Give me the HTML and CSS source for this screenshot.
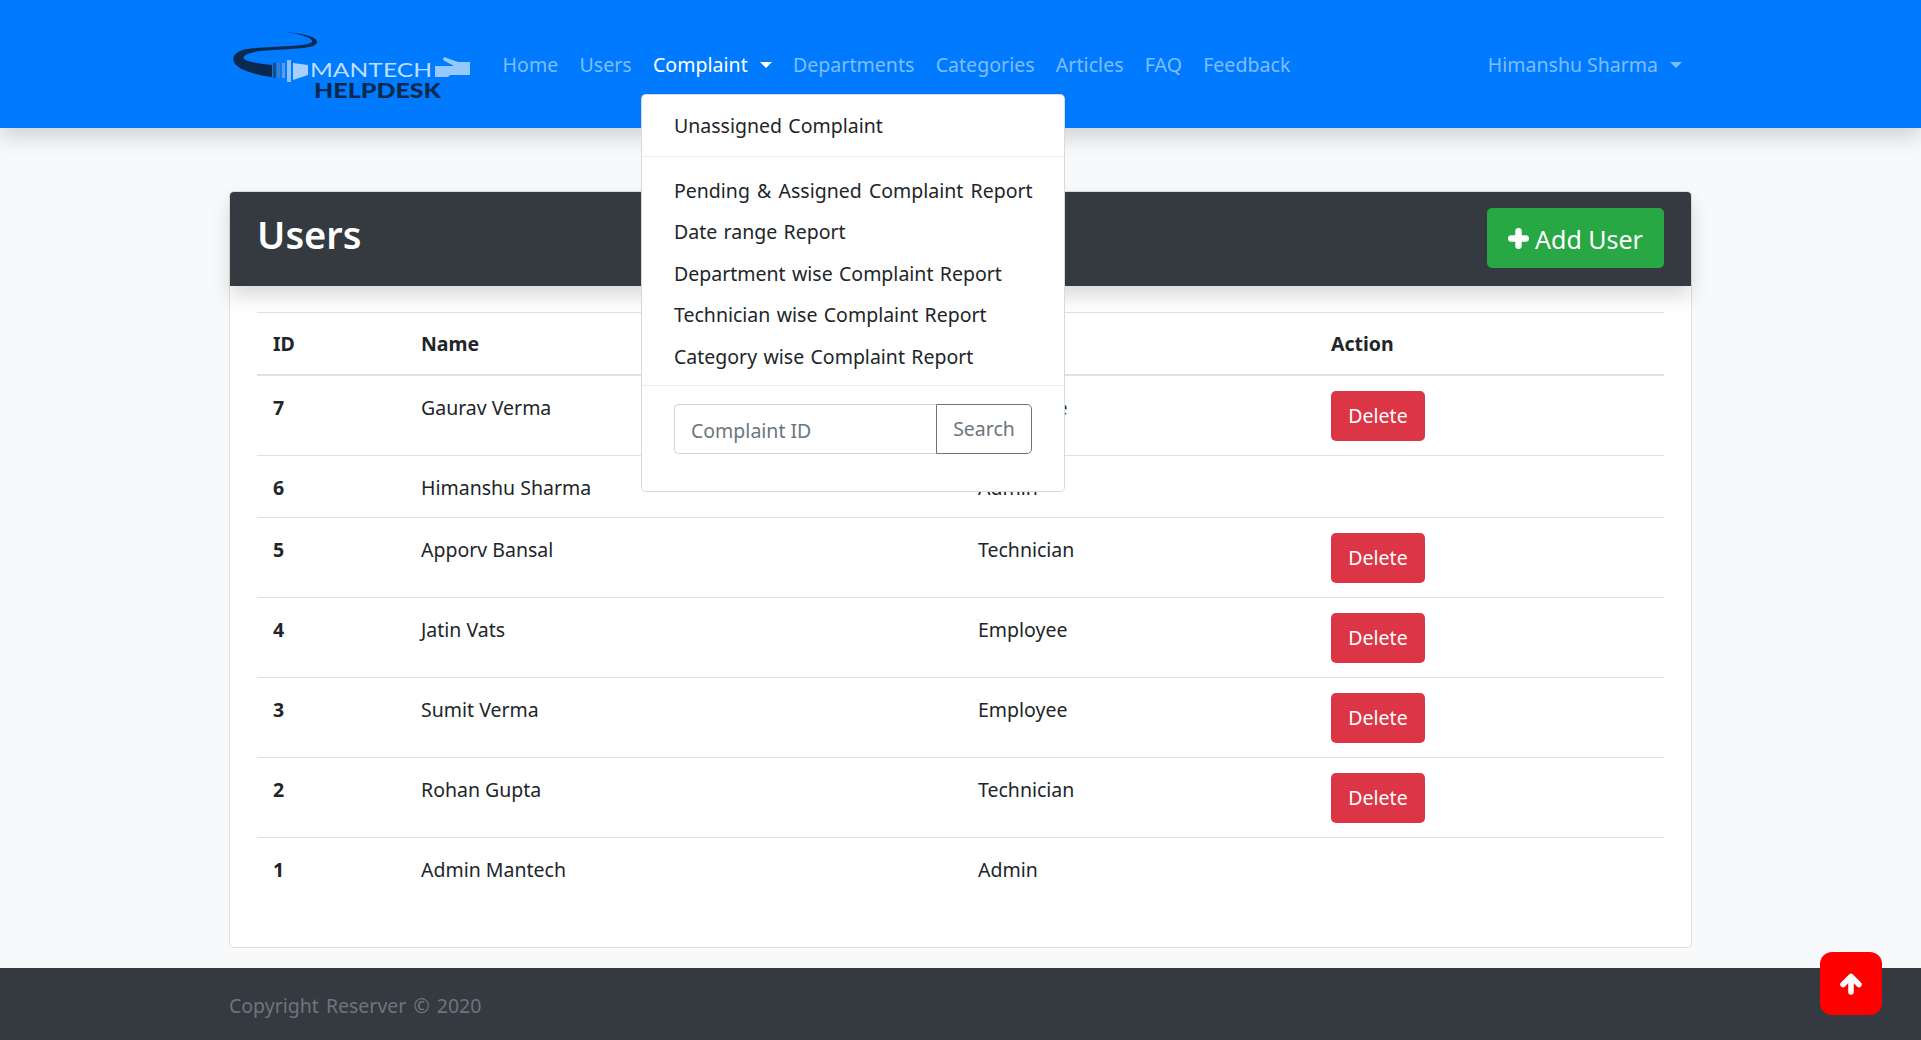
FILE: index.html
```html
<!DOCTYPE html>
<html>
<head>
  <meta charset="utf-8">
  <title>Users</title>
  <link rel="stylesheet" href="styles.css">
</head>
<body>
  <nav class="navbar">
    <div class="nav-inner">
      <a class="logo" href="#">
        <svg width="246" height="76" viewBox="0 0 246 76">
          <path d="M50 2C68 3 85 6 85 12C85 17 72 18 60 19C45 20 24 20 16 24C10 26 10 29 16 31C22 33 32 34 40 35L40 47C28 46 10 41 4 35C0 31 0 26 6 22C12 18 25 18 40 17C55 16 76 16 80 12C82 8 66 3 50 2Z" fill="#0a2a4d"/>
          <rect x="41" y="33" width="3" height="15" fill="#1c4f86"/>
          <rect x="45" y="33" width="3" height="15" fill="#3d7fc6"/>
          <rect x="50" y="33" width="3" height="15" fill="#5c9de6"/>
          <rect x="55" y="30" width="4" height="22" fill="#8cc0ff"/>
          <path d="M61 33L76 35L76 45L61 50Z" fill="#a5d0ff"/>
          <text class="logo-top" x="78" y="47" textLength="122" lengthAdjust="spacingAndGlyphs">MANTECH</text>
          <path d="M203 36L222 36L211 30L212 27L226 32L238 32L238 45L218 45L216 47L203 47Z" fill="#96c9ff"/>
          <text class="logo-bottom" x="82" y="67.5" textLength="127" lengthAdjust="spacingAndGlyphs">HELPDESK</text>
        </svg>
      </a>
      <ul class="nav-links">
        <li><a href="#">Home</a></li>
        <li><a href="#">Users</a></li>
        <li><a class="active caret" href="#">Complaint</a></li>
        <li><a href="#">Departments</a></li>
        <li><a href="#">Categories</a></li>
        <li><a href="#">Articles</a></li>
        <li><a href="#">FAQ</a></li>
        <li><a href="#">Feedback</a></li>
      </ul>
      <a class="user-link caret" href="#">Himanshu Sharma</a>
    </div>
  </nav>

  <div class="dropdown">
    <a href="#">Unassigned Complaint</a>
    <hr class="hr-top">
    <a class="item-wide" href="#">Pending &amp; Assigned Complaint Report</a>
    <a href="#">Date range Report</a>
    <a href="#">Department wise Complaint Report</a>
    <a href="#">Technician wise Complaint Report</a>
    <a href="#">Category wise Complaint Report</a>
    <hr class="hr-bottom">
    <form class="search">
      <input type="text" placeholder="Complaint ID">
      <button type="button">Search</button>
    </form>
  </div>

  <main class="card">
    <div class="card-head">
      <h2>Users</h2>
      <a class="btn-add" href="#">
        <svg width="21" height="21" viewBox="0 0 21 21"><path d="M10.5 3.25V17.75M3.25 10.5H17.75" fill="none" stroke="#fff" stroke-width="6.5" stroke-linecap="round"/></svg>
        Add User
      </a>
    </div>
    <div class="card-body">
      <table>
        <thead>
          <tr><th class="col-id">ID</th><th class="col-name">Name</th><th class="col-role">Type</th><th>Action</th></tr>
        </thead>
        <tbody>
          <tr><th>7</th><td>Gaurav Verma</td><td>Employee</td><td><a class="btn-del" href="#">Delete</a></td></tr>
          <tr><th>6</th><td>Himanshu Sharma</td><td>Admin</td><td></td></tr>
          <tr><th>5</th><td>Apporv Bansal</td><td>Technician</td><td><a class="btn-del" href="#">Delete</a></td></tr>
          <tr><th>4</th><td>Jatin Vats</td><td>Employee</td><td><a class="btn-del" href="#">Delete</a></td></tr>
          <tr><th>3</th><td>Sumit Verma</td><td>Employee</td><td><a class="btn-del" href="#">Delete</a></td></tr>
          <tr><th>2</th><td>Rohan Gupta</td><td>Technician</td><td><a class="btn-del" href="#">Delete</a></td></tr>
          <tr><th>1</th><td>Admin Mantech</td><td>Admin</td><td></td></tr>
        </tbody>
      </table>
    </div>
  </main>

  <footer>
    <p>Copyright Reserver © 2020</p>
  </footer>

  <a class="to-top" href="#">
    <svg width="22" height="22" viewBox="0 0 22 22"><path d="M11 4V19M3 11.5L11 3.5L19 11.5" fill="none" stroke="#fff" stroke-width="5.5" stroke-linecap="round" stroke-linejoin="round"/></svg>
  </a>
</body>
</html>
```

FILE: styles.css
```css
*{
  box-sizing: border-box;
}
html, body{
  margin: 0;
  padding: 0;
  overflow: hidden;
}
body{
  height: 1040px;
  background: #f8f9fa;
  color: #212529;
  font-family: "Noto Sans", "Open Sans", sans-serif;
  font-size: 19.5px;
  line-height: 30px;
}
a{
  text-decoration: none;
}

/* navbar */
.navbar{
  height: 128px;
  background: #007bff;
  box-shadow: 0 10px 20px rgba(0,0,0,.15);
  padding: 0 229px 0 229px;
}
.nav-inner{
  display: flex;
  align-items: center;
  height: 100%;
  padding-top: 2px;
}
.logo{
  display: block;
  width: 263px;
  height: 76px;
  padding-left: 3px;
  margin-top: 6px;
}
.logo-top{
  font-family: "Lato", sans-serif;
  font-size: 20px;
  fill: #bfdeff;
}
.logo-bottom{
  font-family: "Lato", sans-serif;
  font-size: 21px;
  font-weight: 900;
  fill: #0a2a4d;
}
.nav-links{
  display: flex;
  list-style: none;
  margin: 0;
  padding: 0;
  flex: 1;
  letter-spacing: .05px;
}
.nav-links a{
  display: block;
  padding: 0 10.6px;
  color: rgba(255,255,255,.5);
}
.nav-links a.active{
  color: #fff;
}
.user-link{
  color: rgba(255,255,255,.5);
  margin-right: 10px;
}
.caret::after{
  content: "";
  display: inline-block;
  margin-left: 12px;
  vertical-align: 4px;
  border-top: 6px solid;
  border-left: 6px solid transparent;
  border-right: 6px solid transparent;
}

/* complaint menu */
.dropdown{
  position: absolute;
  left: 641px;
  top: 94px;
  width: 424px;
  height: 398px;
  background: #fff;
  border: 1px solid rgba(0,0,0,.15);
  border-radius: 5px;
  padding: 10px 0;
  z-index: 5;
}
.dropdown a{
  display: block;
  padding: 5.75px 32px;
  color: #212529;
  white-space: nowrap;
  word-spacing: 1.3px;
}
.dropdown a.item-wide{
  word-spacing: 2.1px;
}
.dropdown hr{
  border: 0;
  border-top: 1px solid #e9ecef;
}
.hr-top{
  margin: 9px 0 13.5px 0;
}
.hr-bottom{
  margin: 7.5px 0 10px 0;
}
.search{
  display: flex;
  margin: 18px 32px 0 32px;
}
.search input{
  width: 262px;
  height: 50px;
  padding: 2px 16px 0 16px;
  font: inherit;
  color: #495057;
  background: #fff;
  border: 1px solid #ced4da;
  border-right: 0;
  border-radius: 5px 0 0 5px;
  outline: none;
}
.search input::placeholder{
  color: #6c757d;
}
.search button{
  width: 96px;
  height: 50px;
  font: inherit;
  color: #6c757d;
  background: #fff;
  border: 1px solid #6c757d;
  border-radius: 0 5px 5px 0;
  padding: 0;
}

/* users card */
.card{
  margin: 63px 229px 0 229px;
  height: 757px;
  background: #fff;
  border: 1px solid rgba(0,0,0,.125);
  border-radius: 5px;
}
.card-head{
  display: flex;
  justify-content: space-between;
  align-items: center;
  height: 94px;
  padding: 0 27px;
  background: #343a40;
  color: #fff;
  border-radius: 4px 4px 0 0;
  box-shadow: 0 10px 20px rgba(0,0,0,.15);
  position: relative;
}
.card-head h2{
  margin: 0 0 10px 0;
  font-size: 38px;
  font-weight: 600;
  line-height: 48px;
}
.btn-add{
  display: flex;
  align-items: center;
  gap: 6px;
  height: 60px;
  width: 177px;
  justify-content: center;
  padding-top: 2px;
  margin-bottom: 2px;
  background: #28a745;
  color: #fff;
  font-size: 25px;
  border-radius: 5px;
}
.btn-add svg{
  margin-top: -2px;
}
.card-body{
  padding: 26px 27px 0 27px;
}
table{
  width: 100%;
  border-collapse: collapse;
  table-layout: fixed;
}
th, td{
  padding: 17px 16px 14px 16px;
  text-align: left;
  vertical-align: top;
  border-top: 1px solid #dee2e6;
}
thead th{
  padding: 16px 16px 15px 16px;
  border-bottom: 2.5px solid #dee2e6;
  font-weight: 700;
}
tbody th{
  font-weight: 700;
}
.col-id{
  width: 148px;
}
.col-name{
  width: 557px;
}
.col-role{
  width: 353px;
}
.btn-del{
  display: block;
  width: 94px;
  height: 50px;
  margin: -2px 0 0 0;
  line-height: 49px;
  text-align: center;
  background: #dc3545;
  color: #fff;
  border-radius: 5px;
}

/* footer */
footer{
  margin-top: 20px;
  height: 72px;
  background: #343a40;
  padding: 0 229px;
}
footer p{
  margin: 0;
  padding-top: 23px;
  color: #6c757d;
  word-spacing: 2px;
}
.to-top{
  position: fixed;
  left: 1820px;
  top: 952px;
  width: 62px;
  height: 63px;
  display: flex;
  align-items: center;
  justify-content: center;
  background: #f00;
  border-radius: 12px;
  z-index: 6;
}
```
